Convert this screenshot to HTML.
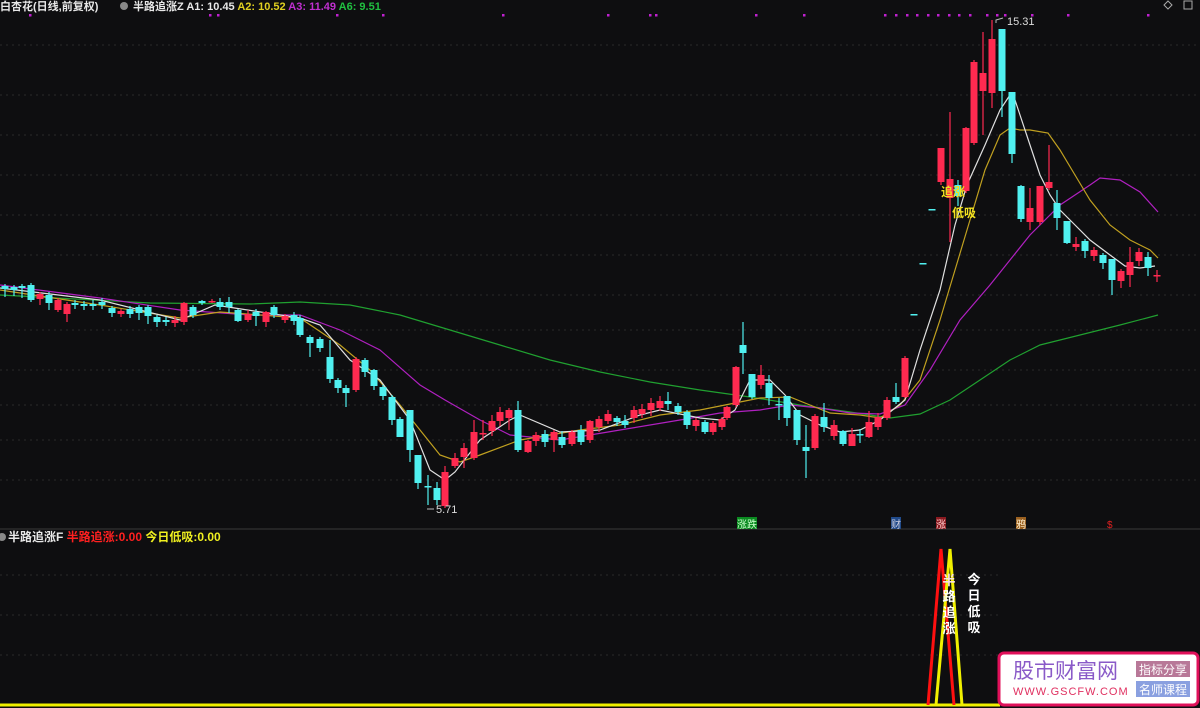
<!DOCTYPE html>
<html><head><meta charset="utf-8"><style>
html,body{margin:0;padding:0;background:#0e0e10;width:1200px;height:708px;overflow:hidden}
svg{display:block}
text{font-family:"Liberation Sans","Noto Sans CJK SC",sans-serif}
</style></head><body>
<svg id="s" width="1200" height="708" xmlns="http://www.w3.org/2000/svg">
<rect width="1200" height="708" fill="#0e0e10"/>
<g id="grid" stroke="#2a2a2a" stroke-dasharray="2,4" stroke-width="1"></g>
<line x1="0" y1="529" x2="1200" y2="529" stroke="#3a3a3a" stroke-width="1"/>
<g id="ma"></g>
<g id="c"></g>
<g id="dots" fill="#c020d0"></g>
<text x="0" y="10" font-size="11" fill="#e8e8e8" font-weight="bold">白杏花(日线,前复权)</text>
<circle cx="124" cy="6" r="4" fill="#888"/>
<text x="133" y="10" font-size="11" font-weight="bold"><tspan fill="#e8e8e8">半路追涨Z A1: 10.45 </tspan><tspan fill="#e0d020">A2: 10.52 </tspan><tspan fill="#c030d0">A3: 11.49 </tspan><tspan fill="#20c040">A6: 9.51</tspan></text>
<path d="M1168 1 L1172 5 L1168 9 L1164 5 Z" fill="none" stroke="#aaa"/>
<rect x="1184" y="1" width="8" height="8" fill="none" stroke="#aaa"/>
<text x="1007" y="25" font-size="11" fill="#ddd">15.31</text>
<path d="M1003 18 L996 20 L996 23" stroke="#bbb" fill="none"/>
<text x="436" y="513" font-size="11" fill="#ddd">5.71</text>
<path d="M434 509 L427 509" stroke="#bbb"/>
<text x="941" y="196" font-size="12" font-weight="bold" fill="#f0e020">追涨</text>
<text x="952" y="217" font-size="12" font-weight="bold" fill="#f0e020">低吸</text>
<rect x="737" y="517" width="20" height="12" fill="#0a8a20"/><text x="737" y="528" font-size="10" fill="#cfc">涨跌</text>
<rect x="891" y="517" width="10" height="12" fill="#204a8a"/><text x="891" y="528" font-size="10" fill="#ccd">财</text>
<rect x="936" y="517" width="10" height="12" fill="#8a1a20"/><text x="936" y="528" font-size="10" fill="#fcc">涨</text>
<rect x="1016" y="517" width="10" height="12" fill="#9a6020"/><text x="1016" y="528" font-size="10" fill="#fec">鸦</text>
<text x="1107" y="528" font-size="10" fill="#e02020">$</text>
<circle cx="2" cy="537" r="4" fill="#888"/>
<text x="8" y="541" font-size="12" font-weight="bold"><tspan fill="#e8e8e8">半路追涨F </tspan><tspan fill="#ff2020">半路追涨:0.00 </tspan><tspan fill="#f0f020">今日低吸:0.00</tspan></text>
<line x1="0" y1="705" x2="1000" y2="705" stroke="#f0f000" stroke-width="3"/>
<polyline points="928,705 941,549 954,705" fill="none" stroke="#ff1010" stroke-width="3"/>
<polyline points="936,705 950,549 962,705" fill="none" stroke="#f0f000" stroke-width="3"/>
<g font-size="13" font-weight="bold" fill="#fff" text-anchor="middle">
<text x="949" y="585" fill="#f6e0e0">半</text><text x="949" y="601">路</text><text x="949" y="617">追</text><text x="949" y="633">涨</text>
<text x="974" y="584">今</text><text x="974" y="600">日</text><text x="974" y="616">低</text><text x="974" y="632">吸</text>
</g>
<rect x="999" y="653" width="199" height="52" rx="5" fill="#fff" stroke="#e0105a" stroke-width="3"/>
<text x="1013" y="678" font-size="21" fill="#8a5ac8" font-family="Liberation Serif,Noto Serif CJK SC,serif">股市财富网</text>
<text x="1013" y="695" font-size="11" fill="#e03060" font-family="Liberation Serif,serif" letter-spacing="1">WWW.GSCFW.COM</text>
<rect x="1136" y="661" width="54" height="16" fill="#b87898"/><text x="1163" y="674" font-size="12" fill="#fff" text-anchor="middle">指标分享</text>
<rect x="1136" y="681" width="54" height="16" fill="#8aa0e0"/><text x="1163" y="694" font-size="12" fill="#fff" text-anchor="middle">名师课程</text>
</svg>
<script>
var NS="http://www.w3.org/2000/svg";
function el(p,t,a){var e=document.createElementNS(NS,t);for(var k in a)e.setAttribute(k,a[k]);p.appendChild(e);return e;}
var g=document.getElementById('grid');
[45,95,135,175,215,255,295,330,370,405,440,480].forEach(function(y){el(g,'line',{x1:0,x2:1200,y1:y,y2:y});});
[575,615,655].forEach(function(y){el(g,'line',{x1:0,x2:1000,y1:y,y2:y});});
var R="#ff2a50",C="#50f0f0";
// x, top, bot, wickTop, wickBot, color
var d=[
[5,286,289,284,297,'c'],[14,287,290,285,296,'c'],[22,286,288,284,298,'c'],[31,285,300,283,302,'c'],[40,294,299,292,305,'r'],[49,295,303,292,310,'c'],[58,300,310,298,312,'r'],[67,304,314,302,322,'r'],[75,303,305,300,309,'c'],[84,304,306,301,310,'c'],[93,304,306,300,310,'c'],[102,302,305,298,309,'c'],[112,308,313,306,317,'c'],[121,311,314,309,317,'r'],[130,309,314,306,318,'c'],[139,307,313,305,320,'c'],[148,307,316,305,324,'c'],[157,317,322,315,327,'c'],[166,320,322,317,326,'c'],[175,320,323,316,327,'r'],[184,303,322,302,325,'r'],[193,307,315,305,318,'c'],[202,301,303,300,305,'c'],[212,301,302,299,303,'r'],[220,302,307,298,310,'c'],[229,302,307,297,313,'c'],[238,310,321,309,322,'c'],[248,314,320,310,322,'r'],[256,312,316,309,326,'c'],[266,312,322,311,327,'r'],[274,307,315,305,318,'c'],[285,316,320,314,323,'r'],[294,315,321,312,325,'c'],[300,318,335,315,337,'c'],[310,337,343,335,357,'c'],[320,339,348,337,352,'c'],[330,357,379,340,383,'c'],[338,380,388,378,393,'c'],[346,388,393,385,407,'c'],[356,359,390,357,392,'r'],[365,360,372,358,377,'c'],[374,370,386,369,390,'c'],[383,387,396,385,400,'c'],[392,397,420,395,425,'c'],[400,419,437,417,436,'c'],[410,410,450,410,462,'c'],[418,455,483,455,489,'c'],[428,486,487,475,505,'c'],[437,488,500,482,505,'c'],[445,472,506,466,508,'r'],[455,458,466,453,468,'r'],[464,448,457,443,468,'r'],[474,432,458,420,460,'r'],[483,433,433,420,440,'r'],[492,421,431,415,436,'r'],[500,412,421,407,426,'r'],[509,410,418,408,430,'r'],[518,410,450,401,452,'c'],[528,441,452,440,453,'r'],[536,435,441,432,446,'r'],[545,434,442,430,447,'c'],[554,432,440,430,452,'r'],[562,437,445,431,448,'c'],[572,432,444,430,446,'r'],[581,430,442,425,445,'c'],[590,421,440,420,443,'r'],[599,419,427,416,432,'r'],[608,414,421,410,424,'r'],[617,418,422,416,426,'c'],[625,421,425,415,428,'c'],[634,410,418,406,423,'r'],[642,409,414,404,418,'r'],[651,403,410,398,416,'r'],[660,401,408,396,411,'r'],[668,401,404,392,410,'c'],[678,406,412,403,415,'c'],[687,412,425,410,429,'c'],[696,420,426,418,431,'r'],[705,422,432,420,434,'c'],[713,423,432,421,435,'r'],[722,419,427,417,430,'r'],[727,407,418,406,420,'r'],[736,367,405,366,407,'r'],[743,345,353,322,374,'c'],[752,374,397,374,399,'c'],[761,375,385,365,389,'r'],[769,383,398,375,405,'c'],[779,404,404,398,420,'c'],[787,396,418,396,426,'c'],[797,410,440,412,445,'c'],[806,447,451,425,478,'c'],[815,416,448,414,450,'r'],[824,417,427,403,432,'c'],[834,425,436,420,440,'r'],[843,431,444,430,446,'c'],[852,434,446,428,446,'r'],[860,434,435,429,443,'c'],[869,422,437,411,438,'r'],[878,417,427,413,430,'r'],[887,400,418,397,420,'r'],[896,397,402,383,404,'c'],[905,358,397,356,398,'r'],[914,314,315,314,315,'c'],[923,263,264,263,264,'c'],[932,209,210,209,210,'c'],[941,148,182,148,185,'r'],[950,179,198,112,242,'r'],[958,185,196,180,206,'c'],[966,128,191,127,193,'r'],[974,62,143,60,145,'r'],[983,73,91,32,135,'r'],[992,39,93,20,108,'r'],[1002,29,91,29,117,'c'],[1012,92,154,92,163,'c'],[1021,186,219,185,222,'c'],[1030,208,222,188,230,'r'],[1040,186,222,186,225,'r'],[1049,182,188,145,190,'r'],[1057,203,218,190,230,'c'],[1067,221,243,221,244,'c'],[1076,244,247,237,251,'r'],[1085,241,251,239,258,'c'],[1094,250,256,247,261,'r'],[1103,255,263,253,269,'c'],[1112,259,280,259,295,'c'],[1121,271,281,269,288,'r'],[1130,262,275,247,287,'r'],[1139,252,261,248,266,'r'],[1148,257,268,252,276,'c'],[1157,275,276,270,282,'r']];
var cg=document.getElementById('c');
d.forEach(function(k){var col=k[5]=='r'?R:C;
el(cg,'line',{x1:k[0],x2:k[0],y1:k[3],y2:k[4],stroke:col,'stroke-width':1.2});
var h=Math.max(1.5,k[2]-k[1]);el(cg,'rect',{x:k[0]-3.5,y:k[1],width:7,height:h,fill:col});});
var mg=document.getElementById('ma');
function pl(p,c){el(mg,'polyline',{points:p,fill:'none',stroke:c,'stroke-width':1.2});}
pl("0,295 150,303 250,304 300,302 350,305 400,315 450,330 500,345 550,360 600,372 650,382 700,390 750,397 800,405 850,412 890,418 920,414 950,400 980,380 1010,360 1040,345 1080,335 1120,325 1158,315","#20a030");
pl("0,285 100,298 180,310 250,315 300,315 340,330 380,350 420,385 445,400 480,420 510,435 560,440 620,430 680,420 720,413 760,410 790,405 820,408 850,413 880,414 905,405 930,370 960,320 990,285 1010,260 1030,235 1060,205 1090,185 1100,178 1120,180 1140,192 1158,212","#b020c0");
pl("0,290 100,305 180,318 220,312 300,318 340,345 370,370 400,405 420,430 440,455 460,462 480,455 520,440 580,430 620,425 660,415 700,410 720,406 760,398 790,397 810,405 830,413 860,415 880,418 900,405 920,380 940,320 955,270 970,220 985,170 1000,135 1010,128 1020,130 1030,130 1048,133 1060,150 1075,175 1090,200 1110,225 1130,240 1150,250 1158,258","#c0a020");
pl("0,288 100,300 180,320 215,305 300,318 320,325 350,360 380,380 410,420 430,470 445,480 455,472 480,440 510,420 520,415 560,432 600,430 640,415 660,410 700,418 720,420 735,410 750,380 770,380 785,395 800,415 820,425 840,432 860,430 880,420 905,400 920,350 940,290 955,225 967,185 985,145 1000,110 1010,95 1015,100 1025,130 1040,175 1050,195 1060,210 1075,225 1090,240 1110,255 1125,266 1140,268 1155,266","#e0e0e0");
var dg=document.getElementById('dots');
[30,210,218,337,383,503,608,650,656,756,804,885,896,907,917,928,938,949,959,970,987,997,1005,1032,1068,1148].forEach(function(x){el(dg,'rect',{x:x-1,y:14,width:2.5,height:2.5});});
</script>
</body></html>
